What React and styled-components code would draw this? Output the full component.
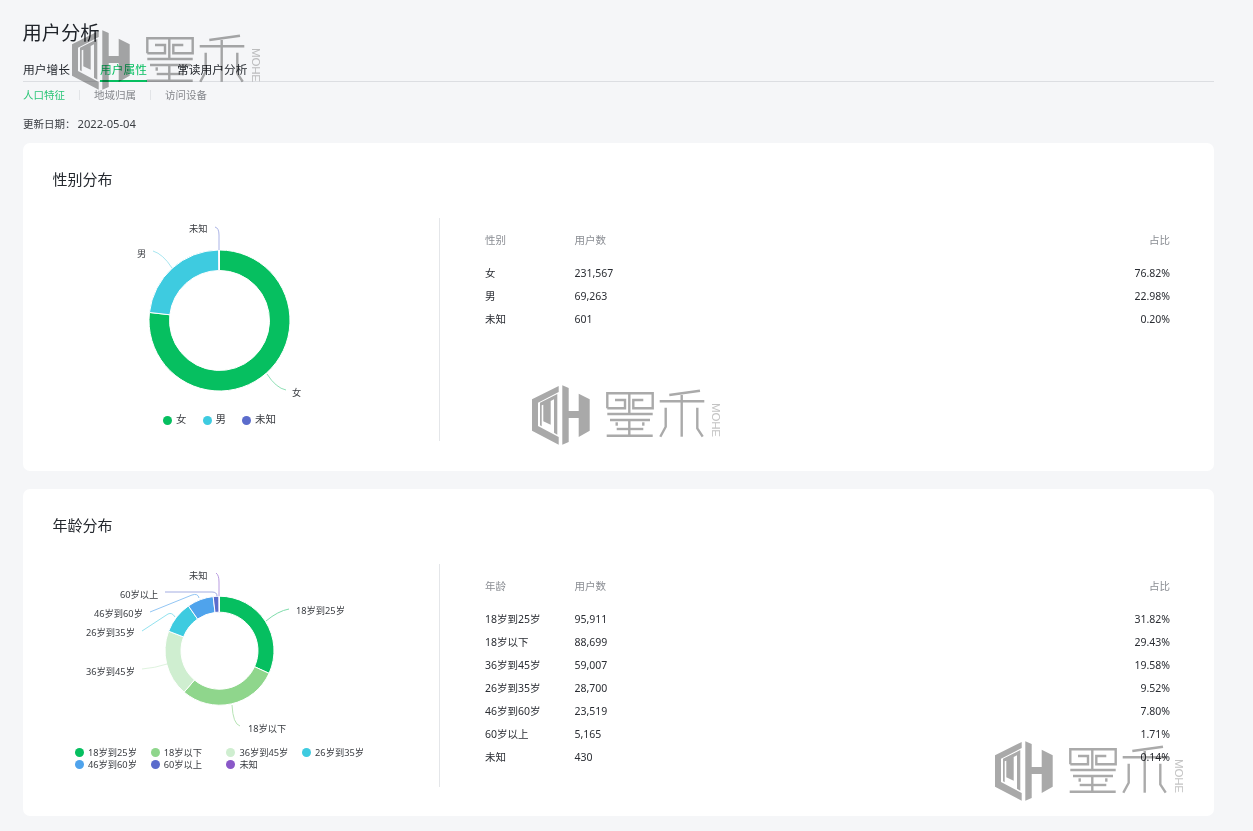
import React from "react";
import styled, { createGlobalStyle } from "styled-components";

const Global = createGlobalStyle`
  html, body { margin: 0; padding: 0; background: #f5f6f8; }
  body { font-family: "Noto Sans", "Noto Sans CJK SC", sans-serif; color: #1f2329; }
  * { box-sizing: border-box; }
`;

const Page = styled.div`
  position: relative;
  width: 1253px;
  height: 831px;
  overflow: hidden;
  padding: 19px 39px 15px 23px;
  background: #f5f6f8;
`;
const Title = styled.h1`
  margin: 0 0 0 -0.5px;
  font-size: 19.25px;
  font-weight: 400;
  line-height: 28px;
  color: #20242a;
`;
const TabList = styled.div`
  display: flex;
  gap: 30px;
  height: 35px;
  border-bottom: 1px solid #dcdee2;
`;
const Tab = styled.div`
  height: 35px;
  padding-top: 13px;
  font-size: 11.75px;
  line-height: 18px;
  color: ${(p) => (p.$active ? "#06bf60" : "#24282e")};
  border-bottom: 2px solid ${(p) => (p.$active ? "#06bf60" : "transparent")};
`;
const SubTabs = styled.div`
  display: flex;
  align-items: center;
  height: 25px;
`;
const SubTab = styled.span`
  font-size: 10.5px;
  color: ${(p) => (p.$active ? "#2cc678" : "#85878c")};
`;
const SubSep = styled.i`
  width: 1px;
  height: 10px;
  margin: 0 14px;
  background: #e2e4e7;
`;
const UpdateLine = styled.div`
  margin: 9px 0 11px;
  font-size: 10.5px;
  line-height: 16px;
  color: #3a3d42;
  span { margin-left: 2px; font-size: 11.2px; }
`;
const Card = styled.section`
  height: ${(p) => p.$h}px;
  margin-bottom: 18px;
  padding: 26px 44px 30px 30px;
  background: #fff;
  border-radius: 7px;
`;
const CardTitle = styled.h2`
  margin: 0 0 29px -0.5px;
  font-size: 15px;
  font-weight: 400;
  line-height: 20px;
  color: #24282e;
`;
const CardBody = styled.div`
  display: flex;
  height: 223px;
`;
const ChartPanel = styled.div`
  flex: none;
  width: 387px;
  border-right: 1px solid #e4e6e9;
`;
const ChartColumn = styled.div`
  width: 333px;
`;
const ChartSvg = styled.svg`
  display: block;
  text {
    font-size: 9.25px;
    fill: #3a3d42;
  }
`;
const Legend = styled.div`
  display: flex;
  justify-content: center;
  gap: 16px;
  height: 20px;
  margin-top: 1px;
  align-items: center;
`;
const LegendGrid = styled.div`
  display: grid;
  grid-template-columns: repeat(4, 75.7px);
  grid-auto-rows: 11.5px;
  margin: 0 0 0 22px;
`;
const LegendItem = styled.div`
  display: flex;
  align-items: center;
  gap: 4px;
  font-size: ${(p) => (p.$small ? 9.25 : 10.5)}px;
  line-height: 11.5px;
  color: #3a3d42;
  white-space: nowrap;
`;
const Dot = styled.i`
  flex: none;
  width: 9px;
  height: 9px;
  border-radius: 50%;
  background: ${(p) => p.$c};
`;
const TablePanel = styled.div`
  flex: 1;
  padding: 13px 0 0 45px;
`;
const Row = styled.div`
  display: grid;
  grid-template-columns: 89.5px 1fr 120px;
  height: ${(p) => (p.$head ? 18 : 23)}px;
  margin-bottom: ${(p) => (p.$head ? 12 : 0)}px;
  align-items: center;
  font-size: 10.5px;
  line-height: 18px;
  color: ${(p) => (p.$head ? "#8a8d93" : "#2a2d33")};
`;
const RightCell = styled.span`
  text-align: right;
`;
const Watermark = styled.svg`
  position: absolute;
  left: ${(p) => p.$x}px;
  top: ${(p) => p.$y}px;
  mix-blend-mode: multiply;
  pointer-events: none;
`;

function Logo({ x, y }) {
  const px = (a) => a.map(([m, n]) => `${(m / 3 - 4).toFixed(1)},${(n / 3 - 3).toFixed(1)}`).join(" ");
  const ch = (a) => a.map(([m, n]) => `${(m / 3 + 68).toFixed(1)},${(n / 3).toFixed(1)}`).join(" ");
  const strokes = [
    [[22, 70], [22, 25], [158, 25], [158, 70], [100, 70], [100, 45], [130, 45]],
    [[45, 45], [75, 45], [75, 70], [22, 70]],
    [[88, 25], [88, 85]],
    [[22, 87], [158, 87]],
    [[30, 105], [150, 105]],
    [[50, 132], [130, 132]],
    [[20, 152], [158, 152]],
    [[88, 105], [88, 152]],
    [[50, 112], [50, 122]],
    [[130, 112], [130, 122]],
    [[208, 30], [300, 17]],
    [[179, 49], [313, 49]],
    [[245, 30], [245, 155]],
    [[197, 68], [197, 125], [181, 155]],
    [[292, 68], [292, 130], [308, 155]],
  ];
  return (
    <Watermark $x={x} $y={y} width="190" height="62" viewBox="0 0 190 62">
      <g fill="#a9a9a9">
        <polygon points={px([[92, 12], [92, 30], [30, 62], [30, 132], [92, 165], [92, 188], [12, 146], [12, 52]])} />
        <polygon points={px([[36, 130], [36, 62], [88, 36], [88, 158], [78, 152], [78, 52], [68, 57], [68, 128], [46, 118], [46, 68], [41, 70], [41, 133]])} />
        <polygon points={px([[103, 10], [122, 18], [122, 87], [152, 87], [152, 35], [185, 52], [185, 146], [152, 165], [152, 108], [122, 108], [122, 180], [103, 188]])} />
      </g>
      <g fill="none" stroke="#aaaaaa" strokeWidth="2.4">
        {strokes.map((s, i) => (
          <polyline key={i} points={ch(s)} />
        ))}
      </g>
      <text
        transform="translate(180 18) rotate(90)"
        fontSize="11.5"
        fontFamily="'Liberation Sans', sans-serif"
        fill="#c4c4c4"
        textLength="34"
      >
        MOHE
      </text>
    </Watermark>
  );
}

function arc(cx, cy, r0, r1, a0, a1) {
  const p = (r, a) => [cx + r * Math.sin(a), cy - r * Math.cos(a)].map((v) => v.toFixed(2)).join(" ");
  const large = a1 - a0 > Math.PI ? 1 : 0;
  return `M${p(r1, a0)}A${r1} ${r1} 0 ${large} 1 ${p(r1, a1)}L${p(r0, a1)}A${r0} ${r0} 0 ${large} 0 ${p(r0, a0)}Z`;
}

function Donut({ view, height, center, slices, calls }) {
  const [cx, cy, r0, r1] = center;
  let acc = 0;
  return (
    <ChartSvg width="333" height={height} viewBox={view}>
      {slices.map((s) => {
        const a0 = acc;
        acc += (s.v / 100) * Math.PI * 2;
        return (
          <path key={s.n} d={arc(cx, cy, r0, r1, a0, acc)} fill={s.c} stroke="#fff" strokeWidth="1" />
        );
      })}
      {calls.map((c) => (
        <React.Fragment key={c.t}>
          <path d={c.d} fill="none" stroke={c.c} strokeWidth="1" />
          <text x={c.x} y={c.y}>{c.t}</text>
        </React.Fragment>
      ))}
    </ChartSvg>
  );
}

const G = "#06bf60", L = "#8fd68c", P = "#cfeed0", C = "#3ecbe0", B = "#4fa3ec", I = "#5b6ccc", V = "#8a58c8";

const gender = [
  { n: "女", c: G, v: 76.82, u: "231,567", p: "76.82%" },
  { n: "男", c: C, v: 22.98, u: "69,263", p: "22.98%" },
  { n: "未知", c: I, v: 0.2, u: "601", p: "0.20%" },
];
const age = [
  { n: "18岁到25岁", c: G, v: 31.82, u: "95,911", p: "31.82%" },
  { n: "18岁以下", c: L, v: 29.43, u: "88,699", p: "29.43%" },
  { n: "36岁到45岁", c: P, v: 19.58, u: "59,007", p: "19.58%" },
  { n: "26岁到35岁", c: C, v: 9.52, u: "28,700", p: "9.52%" },
  { n: "46岁到60岁", c: B, v: 7.8, u: "23,519", p: "7.80%" },
  { n: "60岁以上", c: I, v: 1.71, u: "5,165", p: "1.71%" },
  { n: "未知", c: V, v: 0.14, u: "430", p: "0.14%" },
];
const genderCalls = [
  { t: "女", x: 292, y: 396, c: "#8fe0b6", d: "M267 374Q276 388 286 390" },
  { t: "男", x: 137, y: 257, c: "#a8e6f0", d: "M172 268Q163 254 153 251" },
  { t: "未知", x: 189, y: 232, c: "#aab3e6", d: "M219 250V235Q219 228 215 227" },
];
const ageCalls = [
  { t: "18岁到25岁", x: 296, y: 614, c: "#7fdcab", d: "M266 621Q278 611 289 609" },
  { t: "18岁以下", x: 248, y: 732, c: "#b7e4b5", d: "M232 705Q233 724 240 726" },
  { t: "36岁到45岁", x: 86, y: 675, c: "#dff3df", d: "M167 664Q155 668 142 669" },
  { t: "26岁到35岁", x: 86, y: 636, c: "#93e2ef", d: "M175 617Q172 612 168 614L142 631" },
  { t: "46岁到60岁", x: 94, y: 617, c: "#93c6f4", d: "M199 598Q198 593 192 595L150 612" },
  { t: "60岁以上", x: 120, y: 598, c: "#a3ade2", d: "M217 596Q217 592 212 592L165 592" },
  { t: "未知", x: 189, y: 579, c: "#b99ce0", d: "M219 596V582Q219 575 216 573" },
];

function DataTable({ head, rows }) {
  return (
    <TablePanel>
      <Row $head>
        <span>{head}</span>
        <span>用户数</span>
        <RightCell>占比</RightCell>
      </Row>
      {rows.map((r) => (
        <Row key={r.n}>
          <span>{r.n}</span>
          <span>{r.u}</span>
          <RightCell>{r.p}</RightCell>
        </Row>
      ))}
    </TablePanel>
  );
}

export default function App() {
  return (
    <Page>
      <Global />
      <Title>用户分析</Title>
      <TabList>
        <Tab>用户增长</Tab>
        <Tab $active>用户属性</Tab>
        <Tab>常读用户分析</Tab>
      </TabList>
      <SubTabs>
        <SubTab $active>人口特征</SubTab>
        <SubSep />
        <SubTab>地域归属</SubTab>
        <SubSep />
        <SubTab>访问设备</SubTab>
      </SubTabs>
      <UpdateLine>更新日期：<span>2022-05-04</span></UpdateLine>

      <Card $h={328}>
        <CardTitle>性别分布</CardTitle>
        <CardBody>
          <ChartPanel>
            <ChartColumn>
              <Donut view="53 218 333 191" height={191} center={[219.5, 320.5, 50, 70.5]} slices={gender} calls={genderCalls} />
              <Legend>
                {gender.map((s) => (
                  <LegendItem key={s.n}><Dot $c={s.c} />{s.n}</LegendItem>
                ))}
              </Legend>
            </ChartColumn>
          </ChartPanel>
          <DataTable head="性别" rows={gender} />
        </CardBody>
      </Card>

      <Card $h={327}>
        <CardTitle>年龄分布</CardTitle>
        <CardBody>
          <ChartPanel>
            <ChartColumn>
              <Donut view="53 564 333 183" height={183} center={[219.5, 650.7, 38.5, 54.5]} slices={age} calls={ageCalls} />
              <LegendGrid>
                {age.map((s) => (
                  <LegendItem $small key={s.n}><Dot $c={s.c} />{s.n}</LegendItem>
                ))}
              </LegendGrid>
            </ChartColumn>
          </ChartPanel>
          <DataTable head="年龄" rows={age} />
        </CardBody>
      </Card>

      <Logo x={72} y={30} />
      <Logo x={532} y={385} />
      <Logo x={995} y={741} />
    </Page>
  );
}
